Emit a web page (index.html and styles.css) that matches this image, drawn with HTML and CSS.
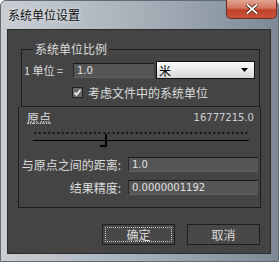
FILE: index.html
```html
<!DOCTYPE html>
<html lang="zh">
<head>
    <meta charset="UTF-8">
    <title>系统单位设置</title>
    <link rel="stylesheet" href="styles.css">
</head>
<body>
    <div class="window">
        <div class="titlebar">
            <span class="title">系统单位设置</span>
            <div class="close">
                <svg width="12" height="10" viewBox="0 0 12 10">
                    <path d="M1.5 1 L10.5 9 M10.5 1 L1.5 9" stroke="#4a1a12" stroke-width="3.4" stroke-linecap="square"/>
                    <path d="M1.5 1 L10.5 9 M10.5 1 L1.5 9" stroke="#ffffff" stroke-width="1.8" stroke-linecap="square"/>
                </svg>
            </div>
        </div>

        <div class="client">
            <fieldset class="group">
                <legend>系统单位比例</legend>
                <div class="unit-row">
                    <span class="unit-label">1 单位 =</span>
                    <div class="field unit-value">1.0</div>
                    <div class="select">
                        <span>米</span>
                        <svg width="7" height="4" viewBox="0 0 7 4"><path d="M0 0 H7 L3.5 4 Z" fill="#000"/></svg>
                    </div>
                </div>
                <div class="check-row">
                    <span class="checkbox">
                        <svg width="9" height="9" viewBox="0 0 9 9"><path d="M1.5 4.5 L3.5 6.8 L7.5 1.8" fill="none" stroke="#f0f0f0" stroke-width="1.8"/></svg>
                    </span>
                    <span>考虑文件中的系统单位</span>
                </div>
            </fieldset>

            <div class="origin">
                <div class="origin-head">
                    <span class="origin-label">原点</span>
                    <span class="origin-value">16777215.0</span>
                </div>
                <div class="slider">
                    <div class="ticks"></div>
                    <div class="track"></div>
                    <svg class="thumb" width="8" height="14" viewBox="0 0 8 14">
                        <path d="M6 0 V12 H0" fill="none" stroke="#000" stroke-width="2"/>
                    </svg>
                </div>
                <div class="form-row">
                    <span class="form-label">与原点之间的距离:</span>
                    <div class="field">1.0</div>
                </div>
                <div class="form-row">
                    <span class="form-label">结果精度:</span>
                    <div class="field">0.0000001192</div>
                </div>
            </div>

            <div class="buttons">
                <div class="btn btn-default"><span>确定</span></div>
                <div class="btn"><span>取消</span></div>
            </div>
        </div>
    </div>
</body>
</html>
```

FILE: styles.css
```css
body {
    margin: 0;
    background: #ffffff;
    font-family: "Noto Sans CJK SC", "DejaVu Sans", sans-serif;
}
.window {
    width: 279px;
    height: 262px;
    box-sizing: border-box;
    padding: 0 7px 7px 6px;
    background: linear-gradient(90deg, #c9ced3 0%, #aab4bd 45%, #7d8a96 100%);
    border: 1px solid #5f6b75;
    border-radius: 6px 6px 0 0;
    display: flex;
    flex-direction: column;
}
.titlebar {
    height: 28px;
    display: flex;
    align-items: flex-start;
    justify-content: space-between;
}
.title {
    margin-top: 7px;
    margin-left: 1px;
    font-size: 12px;
    line-height: 14px;
    color: #111;
    text-shadow: 0 0 4px rgba(255,255,255,0.8);
}
.close {
    width: 51px;
    height: 19px;
    margin-top: -1px;
    margin-right: -6px;
    box-sizing: border-box;
    border: 1px solid #6b2b22;
    border-top: none;
    border-radius: 0 0 5px 5px;
    background: linear-gradient(180deg, #e3a392 0%, #d4745e 45%, #c2402a 55%, #c9533c 100%);
    display: flex;
    align-items: center;
    justify-content: center;
}
.client {
    flex: 1;
    display: flex;
    flex-direction: column;
    background: #444444;
    border: 1px solid #2c2c2c;
    color: #dcdcdc;
    font-size: 12px;
}
.group {
    margin: 12px 0 0 13px;
    width: 239px;
    height: 65px;
    box-sizing: border-box;
    padding: 5px 0 0 2px;
    border: 1px solid #1c1c1c;
    min-width: 0;
    flex: none;
}
.group legend {
    margin-left: 9px;
    padding: 0 2px;
    line-height: 14px;
    font-size: 12px;
}
.unit-row {
    display: flex;
    align-items: center;
    height: 18px;
}
.unit-label {
    width: 49px;
    font-size: 11px;
    white-space: nowrap;
}
.field {
    height: 15px;
    box-sizing: border-box;
    background: #555555;
    border-top: 1px solid #1a1a1a;
    border-left: 1px solid #2a2a2a;
    border-bottom: 1px solid #606060;
    padding-left: 3px;
    font-family: "DejaVu Sans", sans-serif;
    font-size: 10px;
    line-height: 13px;
    color: #e0e0e0;
}
.unit-value {
    width: 81px;
}
.select {
    width: 99px;
    height: 18px;
    margin-left: 2px;
    box-sizing: border-box;
    border: 1px solid #101010;
    background: linear-gradient(180deg, #fbfbfb 0%, #e6e6e6 60%, #d6d6d6 100%);
    color: #000;
    display: flex;
    align-items: center;
    justify-content: space-between;
    padding: 0 6px 0 2px;
    font-size: 12px;
}
.check-row {
    display: flex;
    align-items: center;
    margin: 7px 0 0 48px;
    gap: 5px;
    height: 12px;
}
.checkbox {
    width: 11px;
    height: 11px;
    box-sizing: border-box;
    border: 1px solid #222;
    background: #6a6a6a;
    display: flex;
    align-items: center;
    justify-content: center;
}
.origin {
    margin-left: 10px;
    width: 243px;
    height: 101px;
    flex: none;
    box-sizing: border-box;
    border: 1px solid #1c1c1c;
    border-top: none;
    padding: 4px 0 0 2px;
}
.origin-head {
    display: flex;
    justify-content: space-between;
    align-items: center;
    height: 13px;
    padding: 0 6px 0 6px;
}
.origin-label {
    border-bottom: 1px dotted #bbbbbb;
    line-height: 11px;
}
.origin-value {
    font-family: "DejaVu Sans", sans-serif;
    font-size: 10px;
    color: #d0d0d0;
}
.slider {
    position: relative;
    margin: 8px 0 0 12px;
    width: 216px;
    height: 18px;
}
.ticks {
    height: 2px;
    margin-top: 3px;
    background: radial-gradient(circle, #000 0.9px, transparent 1.1px) 0 0 / 4.6px 2px repeat-x;
}
.track {
    height: 1px;
    margin-top: 6px;
    background: #000;
}
.thumb {
    position: absolute;
    left: 67px;
    top: 2px;
}
.form-row {
    display: flex;
    align-items: center;
    margin-top: 5px;
    height: 18px;
}
.form-row .form-label {
    width: 100px;
    text-align: right;
    white-space: nowrap;
}
.form-row .field {
    width: 130px;
    margin-left: 7px;
}
.buttons {
    display: flex;
    justify-content: flex-end;
    gap: 12px;
    margin: 16px 10px 0 0;
}
.btn {
    width: 73px;
    height: 21px;
    box-sizing: border-box;
    border: 1px solid #1e1e1e;
    background: #484848;
    display: flex;
    align-items: center;
    justify-content: center;
    padding: 2px;
}
.btn span {
    flex: 1;
    align-self: stretch;
    display: flex;
    align-items: center;
    justify-content: center;
    font-size: 12px;
}
.btn-default span {
    outline: 1px dotted #cccccc;
    outline-offset: -1px;
}
```
